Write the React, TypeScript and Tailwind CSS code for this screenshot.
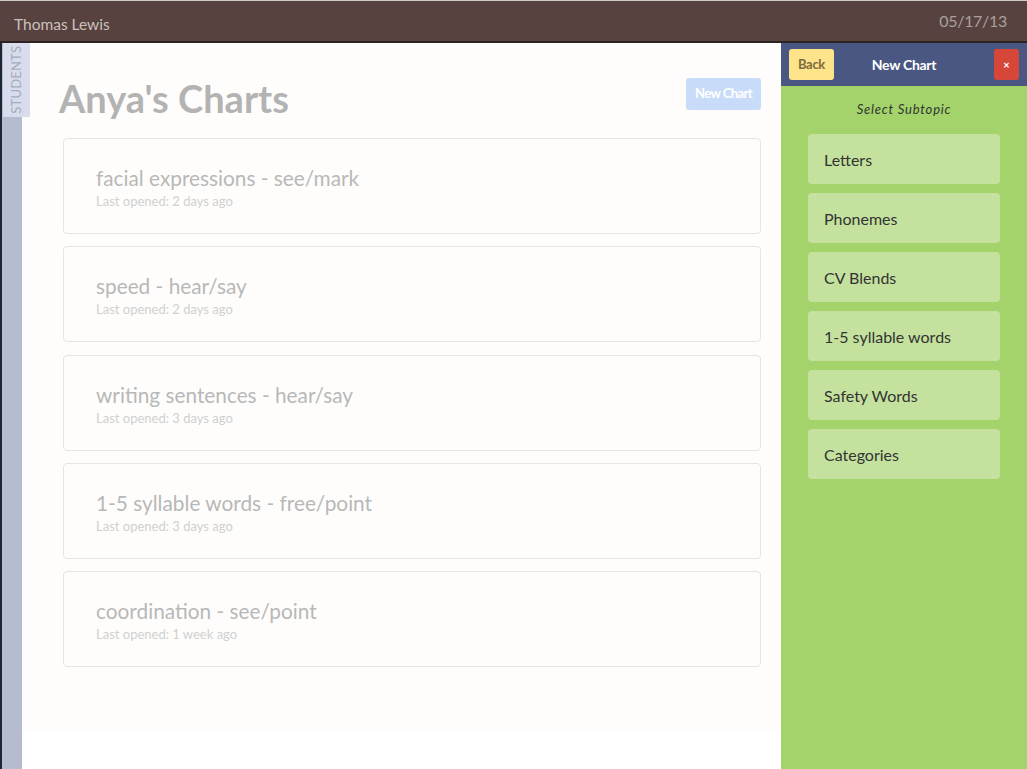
import React from "react";

const charts = [
  { title: "facial expressions - see/mark", opened: "2 days ago" },
  { title: "speed - hear/say", opened: "2 days ago" },
  { title: "writing sentences - hear/say", opened: "3 days ago" },
  { title: "1-5 syllable words - free/point", opened: "3 days ago" },
  { title: "coordination - see/point", opened: "1 week ago" },
];

const subtopics = [
  "Letters",
  "Phonemes",
  "CV Blends",
  "1-5 syllable words",
  "Safety Words",
  "Categories",
];

export default function App() {
  return (
    <div
      className="w-[1027px] h-[769px] flex flex-col overflow-hidden bg-white"
      style={{ fontFamily: "Lato, 'Open Sans', sans-serif" }}
    >
      {/* Top bar */}
      <div className="h-[43px] shrink-0 flex items-center justify-between bg-[#574240] border-t border-t-[#cfcac6] border-b-2 border-b-[#2b2321] pl-[14px] pr-[20px]">
        <span className="text-[15.5px] text-[#cbc1bd] pt-[7px]">Thomas Lewis</span>
        <span className="text-[16px] text-[#a9a09c] tracking-[-0.3px]">05/17/13</span>
      </div>

      <div className="flex flex-1 min-h-0">
        {/* Left strip */}
        <div className="relative w-[22px] shrink-0 flex">
          <div className="w-[2px] bg-[#1d2733]" />
          <div className="flex-1 bg-[#b6bcd0]" />
          <div className="absolute left-[3px] top-0 w-[27px] h-[74px] bg-[#d8dcec] flex items-center justify-center z-10">
            <span className="-rotate-90 text-[13px] tracking-[0.2px] text-[#a7adbf] whitespace-nowrap">
              STUDENTS
            </span>
          </div>
        </div>

        {/* Main */}
        <div className="flex-1 bg-white">
          <div className="h-[687px] bg-[#fefdfb] pl-[38px] pr-[20px]">
            <div className="flex justify-between items-start pt-[35px]">
              <h1 className="text-[38px] font-bold text-[#b3b3b3] leading-[44px] -mt-[2px] -ml-[1px]">
                Anya's Charts
              </h1>
              <button className="w-[75px] h-[32px] rounded-[3px] bg-[#c8dcf9] text-white text-[13px] font-bold tracking-[-0.6px]">
                New Chart
              </button>
            </div>
            <div className="ml-[3px] mt-[18px] flex flex-col gap-[12.25px]">
              {charts.map((c) => (
                <div
                  key={c.title}
                  className="h-[96px] border border-[#e6e5e3] rounded-[4px] pl-[32px] pt-[25px]"
                >
                  <div className="text-[20.8px] leading-[28px] text-[#b8b8b8]">{c.title}</div>
                  <div className="mt-[1px] text-[13px] leading-[16px] text-[#d0d0d0]">
                    Last opened: {c.opened}
                  </div>
                </div>
              ))}
            </div>
          </div>
        </div>

        {/* Right panel */}
        <div className="w-[246px] shrink-0 bg-[#a3d36a] flex flex-col">
          <div className="h-[43px] bg-[#4a5782] grid grid-cols-[1fr_auto_1fr] items-center px-[8px]">
            <div className="flex justify-start">
              <button className="w-[45px] h-[31px] rounded-[3px] bg-[#fde38a] text-[#7d6b3b] text-[13px] font-bold tracking-[-0.3px]">
                Back
              </button>
            </div>
            <span className="text-white text-[14px] font-bold tracking-[-0.3px]">New Chart</span>
            <div className="flex justify-end">
              <button className="w-[25px] h-[31px] rounded-[3px] bg-[#d6473a] text-white text-[11px] font-bold leading-none">
                ×
              </button>
            </div>
          </div>
          <div className="text-center italic text-[13px] tracking-[0.8px] text-[#333] mt-[14px]">
            Select Subtopic
          </div>
          <div className="mt-[14px] px-[27px] flex flex-col gap-[9px]">
            {subtopics.map((s) => (
              <div
                key={s}
                className="h-[50px] rounded-[4px] bg-[#c4e29e] flex items-center pl-[16px] pt-[3px] text-[16px] text-[#333]"
              >
                {s}
              </div>
            ))}
          </div>
        </div>
      </div>
    </div>
  );
}
